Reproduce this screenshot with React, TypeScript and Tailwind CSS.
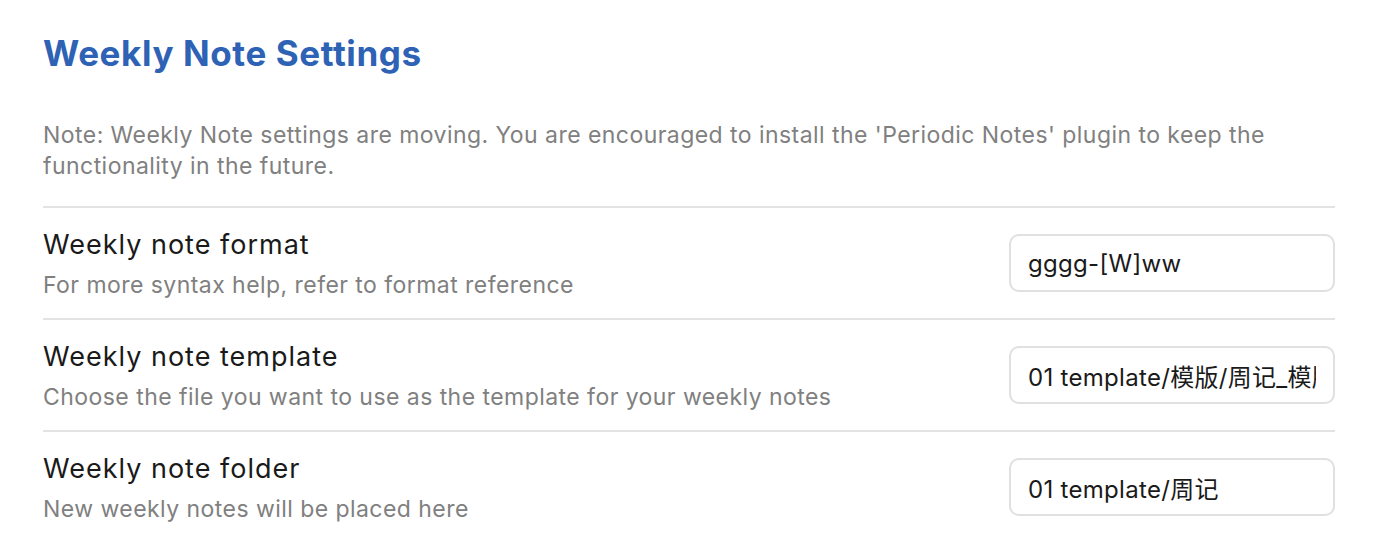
const rows = [
  {
    name: 'Weekly note format',
    desc: 'For more syntax help, refer to format reference',
    value: 'gggg-[W]ww',
  },
  {
    name: 'Weekly note template',
    desc: 'Choose the file you want to use as the template for your weekly notes',
    value: '01 template/模版/周记_模版',
  },
  {
    name: 'Weekly note folder',
    desc: 'New weekly notes will be placed here',
    value: '01 template/周记',
  },
];

export default function App() {
  return (
    <div
      className="min-h-screen bg-white pl-[43px] pr-[49px] pt-[27px]"
      style={{ fontFamily: 'Inter, "Noto Sans CJK SC", sans-serif' }}
    >
      <h2 className="text-[35px] font-bold leading-[52px] tracking-[0.6px] text-[#2e62b5]">
        Weekly Note Settings
      </h2>

      <p className="mt-[41px] pb-[24px] text-[23px] leading-[31px] tracking-[0.45px] text-[#808080]">
        Note: Weekly Note settings are moving. You are encouraged to install the 'Periodic Notes' plugin to keep the
        functionality in the future.
      </p>

      {rows.map((row) => (
        <div
          key={row.name}
          className="flex h-[112px] items-center justify-between border-t-2 border-[#e3e3e3]"
        >
          <div className="flex flex-col">
            <div className="text-[27px] leading-[36px] tracking-[1px] text-[#1a1a1a]">{row.name}</div>
            <div className="mt-[7px] text-[23px] leading-[30px] tracking-[0.45px] text-[#808080]">{row.desc}</div>
          </div>
          <input
            readOnly
            value={row.value}
            className="h-[58px] w-[326px] rounded-[10px] border-2 border-[#e0e0e0] bg-white px-[17px] text-[24px] tracking-[0.3px] text-[#1a1a1a] outline-none"
            style={{ fontFamily: 'Inter, "Noto Sans CJK SC", sans-serif' }}
          />
        </div>
      ))}
    </div>
  );
}
